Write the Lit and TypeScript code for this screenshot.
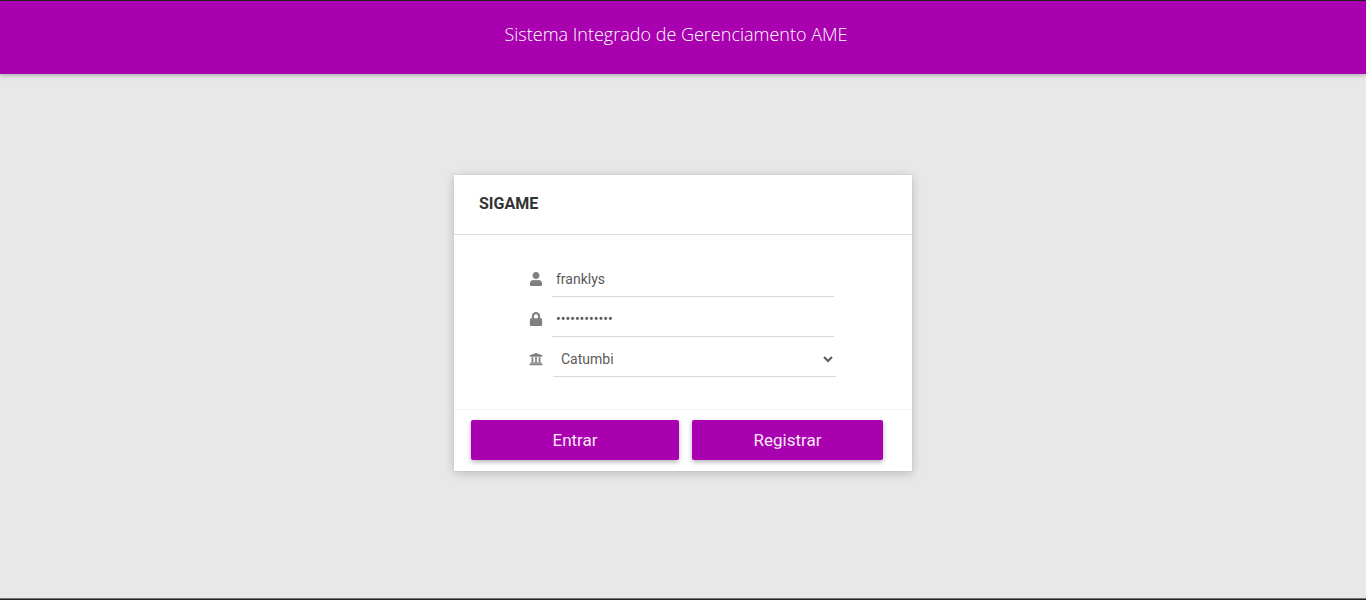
import { LitElement, html, css, svg } from "lit";
import { customElement, state } from "lit/decorators.js";

const userIcon = svg`<path d="M224 256c70.7 0 128-57.3 128-128S294.700 0 224 0 96 57.300 96 128s57.300 128 128 128zm89.600 32h-16.700c-22.200 10.200-46.900 16-72.900 16s-50.600-5.800-72.900-16h-16.700C60.200 288 0 348.200 0 422.400V464c0 26.500 21.500 48 48 48h352c26.500 0 48-21.500 48-48v-41.600c0-74.200-60.200-134.400-134.400-134.400z"/>`;
const lockIcon = svg`<path d="M400 224h-24v-72C376 68.200 307.800 0 224 0S72 68.200 72 152v72H48c-26.500 0-48 21.500-48 48v192c0 26.500 21.500 48 48 48h352c26.500 0 48-21.500 48-48V272c0-26.500-21.500-48-48-48zm-104 0H152v-72c0-39.700 32.300-72 72-72s72 32.300 72 72v72z"/>`;
const bankIcon = svg`<path d="M496 128v16a8 8 0 0 1-8 8h-24v12c0 6.627-5.373 12-12 12H60c-6.627 0-12-5.373-12-12v-12H24a8 8 0 0 1-8-8v-16a8 8 0 0 1 4.941-7.392l232-88a7.996 7.996 0 0 1 6.118 0l232 88A8 8 0 0 1 496 128zm-24 304H40c-13.255 0-24 10.745-24 24v16a8 8 0 0 0 8 8h464a8 8 0 0 0 8-8v-16c0-13.255-10.745-24-24-24zM96 192v192H60c-6.627 0-12 5.373-12 12v20h416v-20c0-6.627-5.373-12-12-12h-36V192h-64v192h-64V192h-64v192h-64V192H96z"/>`;

@customElement("app-root")
export class AppRoot extends LitElement {
  @state() private user = "franklys";
  @state() private password = "abcdefghijkl";

  static styles = css`
    :host {
      display: flex;
      flex-direction: column;
      min-height: 100vh;
      box-sizing: border-box;
      border-top: 1px solid #232323;
      border-bottom: 1px solid #232026;
      background: #e8e8e8;
      color: #5a5a5a;
      font: 14px/20px Roboto, sans-serif;
    }
    * {
      box-sizing: border-box;
    }
    header {
      padding: 19px 14px 26px 0;
      background: #a900b0;
      box-shadow: 0 1px 5px rgba(0, 0, 0, 0.3);
    }
    h1 {
      margin: 0;
      color: #fff;
      font: 300 18px/28px "Open Sans", sans-serif;
      text-align: center;
    }
    main {
      flex: 1;
      display: flex;
      justify-content: center;
      align-items: flex-start;
      padding: 101px 16px 24px;
      border-bottom: 1px solid #77757a;
    }
    .card {
      width: 100%;
      max-width: 458px;
      background: #fff;
      box-shadow: 0 0 0 1px rgba(0, 0, 0, 0.02), 0 2px 10px rgba(0, 0, 0, 0.2);
    }
    h2 {
      margin: 0;
      padding: 17px 25px 18px;
      border-bottom: 1px solid #ddd;
      color: #333;
      font: 700 16px/24px Roboto, sans-serif;
    }
    .fields {
      display: flex;
      flex-direction: column;
      gap: 4px;
      padding: 26px 76px 32px 75px;
    }
    .field {
      display: flex;
      align-items: center;
      gap: 9px;
    }
    .icon {
      display: flex;
      flex: none;
      width: 14px;
    }
    svg {
      width: 14px;
      height: 14px;
      fill: #808080;
    }
    .field input,
    .field select {
      flex: 1;
      min-width: 0;
      height: 36px;
      margin: 0 2px 0 0;
      padding: 0 4px;
      border: 0;
      border-bottom: 1px solid #d8d8d8;
      border-radius: 0;
      outline: 0;
      background: transparent;
      color: inherit;
      font: inherit;
    }
    .field select {
      margin: 0 0 0 1px;
      padding: 0 0 0 4px;
    }
    footer {
      display: grid;
      grid-template-columns: 208fr 191fr;
      gap: 13px;
      padding: 10px 29px 11px 17px;
      border-top: 1px solid #f2f2f2;
    }
    button {
      height: 40px;
      padding: 0;
      border: 0;
      border-radius: 2px;
      background: #a900b0;
      box-shadow: 0 2px 5px rgba(0, 0, 0, 0.3);
      color: #f8e8f8;
      font: 400 17px/24px Roboto, sans-serif;
      cursor: pointer;
    }
  `;

  render() {
    return html`
      <header><h1>Sistema Integrado de Gerenciamento AME</h1></header>
      <main>
        <form class="card" @submit=${(e: Event) => e.preventDefault()}>
          <h2>SIGAME</h2>
          <div class="fields">
            <div class="field">
              <label class="icon" for="user" aria-label="Usuário"
                ><svg viewBox="0 0 448 512">${userIcon}</svg></label
              >
              <input
                id="user"
                type="text"
                .value=${this.user}
                @input=${(e: Event) => (this.user = (e.target as HTMLInputElement).value)}
              />
            </div>
            <div class="field">
              <label class="icon" for="password" aria-label="Senha"
                ><svg viewBox="0 0 448 512">${lockIcon}</svg></label
              >
              <input
                id="password"
                type="password"
                .value=${this.password}
                @input=${(e: Event) => (this.password = (e.target as HTMLInputElement).value)}
              />
            </div>
            <div class="field">
              <label class="icon" for="unit" aria-label="Unidade"
                ><svg viewBox="0 0 512 512">${bankIcon}</svg></label
              >
              <select id="unit">
                <option>Catumbi</option>
              </select>
            </div>
          </div>
          <footer>
            <button type="submit">Entrar</button>
            <button type="button">Registrar</button>
          </footer>
        </form>
      </main>
    `;
  }
}
